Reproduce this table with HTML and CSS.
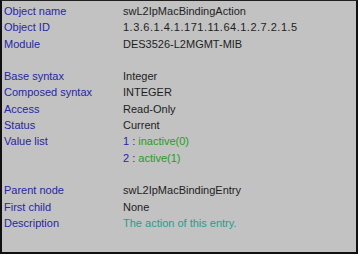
FILE: index.html
```html
<!DOCTYPE html>
<html>
<head>
<meta charset="utf-8">
<link rel="stylesheet" href="styles.css">
</head>
<body>
<div class="panel">
  <div class="row"><span class="label">Object name</span><span class="value">swL2IpMacBindingAction</span></div>
  <div class="row"><span class="label">Object ID</span><span class="value oid">1.3.6.1.4.1.171.11.64.1.2.7.2.1.5</span></div>
  <div class="row"><span class="label">Module</span><span class="value">DES3526-L2MGMT-MIB</span></div>
  <div class="row"></div>
  <div class="row"><span class="label">Base syntax</span><span class="value">Integer</span></div>
  <div class="row"><span class="label">Composed syntax</span><span class="value">INTEGER</span></div>
  <div class="row"><span class="label">Access</span><span class="value">Read-Only</span></div>
  <div class="row"><span class="label">Status</span><span class="value">Current</span></div>
  <div class="row"><span class="label">Value list</span><span class="value"><span class="num">1 :</span> <span class="enum">inactive(0)</span></span></div>
  <div class="row"><span class="label"></span><span class="value"><span class="num">2 :</span> <span class="enum">active(1)</span></span></div>
  <div class="row"></div>
  <div class="row"><span class="label">Parent node</span><span class="value">swL2IpMacBindingEntry</span></div>
  <div class="row"><span class="label">First child</span><span class="value">None</span></div>
  <div class="row"><span class="label">Description</span><span class="value desc">The action of this entry.</span></div>
</div>
</body>
</html>
```
FILE: styles.css
```css
html, body {
  margin: 0;
  padding: 0;
  background: #ffffff;
  width: 360px;
  height: 257px;
  overflow: hidden;
}
.panel {
  box-sizing: border-box;
  width: 358px;
  height: 254px;
  background: #c2c2c2;
  border-top: 1px solid #202020;
  border-left: 2px solid #101010;
  border-right: 2px solid #101010;
  border-bottom: 2px solid #101010;
  padding: 2px 0 0 2px;
  font-family: "Liberation Sans", Arial, sans-serif;
  font-size: 11px;
}
.row {
  display: flex;
  height: 16.3px;
  line-height: 16px;
  white-space: nowrap;
}
.label {
  width: 119px;
  color: #2626a6;
}
.value {
  color: #1e1e1e;
}
.oid {
  letter-spacing: 0.5px;
}
.num {
  color: #2626a6;
}
.enum {
  color: #1f9e1f;
}
.desc {
  color: #1f9e8e;
}
```
